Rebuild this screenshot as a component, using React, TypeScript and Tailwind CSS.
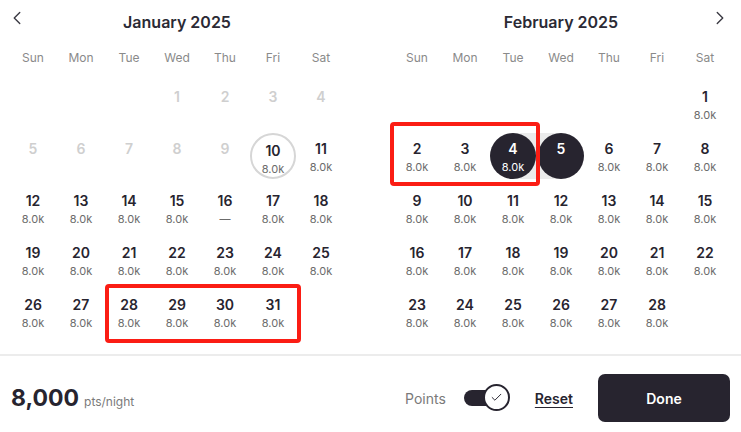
import React from 'react';
import { ChevronLeft, ChevronRight, Check } from 'lucide-react';

type Day = {
  n: number;
  price?: string;
  disabled?: boolean;
  today?: boolean;
  selected?: boolean;
  rangeEnd?: boolean;
  rangeStart?: boolean;
};

const WEEKDAYS = ['Sun', 'Mon', 'Tue', 'Wed', 'Thu', 'Fri', 'Sat'];

const buildMonth = (offset: number, days: number, extra: (n: number) => Partial<Day>) => {
  const cells: (Day | null)[] = [];
  for (let i = 0; i < offset; i++) cells.push(null);
  for (let n = 1; n <= days; n++) cells.push({ n, price: '8.0k', ...extra(n) });
  return cells;
};

const january = buildMonth(3, 31, (n) => {
  if (n < 10) return { disabled: true, price: undefined };
  if (n === 10) return { today: true };
  if (n === 16) return { price: '—' };
  return {};
});

const february = buildMonth(6, 28, (n) => {
  if (n === 4) return { selected: true, rangeStart: true };
  if (n === 5) return { selected: true, rangeEnd: true, price: undefined };
  return {};
});

const DayCell = ({ day }: { day: Day | null }) => {
  if (!day) return <div className="h-[52px]" />;
  return (
    <div className="relative h-[52px] flex justify-center">
      {day.rangeStart && <span className="absolute left-1/2 right-0 top-[3px] h-[46px] bg-[#ebebeb]" />}
      {day.rangeEnd && <span className="absolute left-0 right-1/2 top-[3px] h-[46px] bg-[#ebebeb]" />}
      <div
        className={`relative mt-[3px] w-[46px] h-[46px] rounded-full flex flex-col items-center pt-[7px] ${
          day.selected ? 'bg-[#27242f] text-white' : ''
        } ${day.today ? 'border-2 border-[#d6d6d6] pt-[5px]' : ''}`}
      >
        <span
          className={`text-[14px] leading-[18px] font-semibold ${
            day.disabled ? 'text-[#cfcfcf]' : day.selected ? 'text-white' : 'text-[#27242f]'
          }`}
        >
          {day.n}
        </span>
        {day.price && (
          <span className={`mt-[1px] text-[11px] leading-[16px] ${day.selected ? 'text-white' : 'text-[#6b6b6b]'}`}>
            {day.price}
          </span>
        )}
      </div>
    </div>
  );
};

const Month = ({ title, cells, left, right }: { title: string; cells: (Day | null)[]; left?: boolean; right?: boolean }) => (
  <div className="w-[336px]">
    <div className="relative h-[42px] pt-[2px] flex items-center justify-center">
      {left && <ChevronLeft className="absolute left-[-3px] top-[7px] text-[#3a3942]" size={22} strokeWidth={1.5} />}
      {right && <ChevronRight className="absolute right-[-2px] top-[7px] text-[#3a3942]" size={22} strokeWidth={1.5} />}
      <h2 className="text-[16px] font-semibold text-[#2b2a35]">{title}</h2>
    </div>
    <div className="grid grid-cols-7 h-[36px] pb-[4px] items-center">
      {WEEKDAYS.map((w) => (
        <span key={w} className="text-center text-[12px] text-[#8a8a8a]">{w}</span>
      ))}
    </div>
    <div className="grid grid-cols-7">
      {cells.map((c, i) => (
        <DayCell key={i} day={c} />
      ))}
    </div>
  </div>
);

export default function App() {
  return (
    <div className="relative w-[741px] h-[432px] bg-white overflow-hidden" style={{ fontFamily: 'Inter, "Noto Sans", sans-serif' }}>
      <div className="flex gap-[48px] pl-[9px] h-[354px]">
        <Month title="January 2025" cells={january} left />
        <Month title="February 2025" cells={february} right />
      </div>

      <div className="border-t-2 border-[#ececec] h-[78px] pt-[8px] flex items-center pl-[11px] pr-[11px]">
        <div className="flex items-baseline gap-[5px]">
          <span className="text-[23px] font-bold text-[#27242f]">8,000</span>
          <span className="text-[12px] text-[#7a7a7a]">pts/night</span>
        </div>
        <div className="ml-auto flex items-center">
          <span className="text-[14px] text-[#7a7a7a]">Points</span>
          <div className="relative ml-[18px] w-[46px] h-[28px] flex items-center">
            <span className="w-[40px] h-[16px] rounded-full bg-[#27242f]" />
            <span className="absolute left-[19px] top-0 w-[27px] h-[27px] rounded-full bg-white border-2 border-[#27242f] flex items-center justify-center">
              <Check size={13} strokeWidth={1.8} className="text-[#27242f]" />
            </span>
          </div>
          <span className="ml-[25px] text-[14px] font-semibold text-[#27242f] underline underline-offset-[3px]">Reset</span>
          <button className="ml-[25px] w-[132px] h-[48px] rounded-[7px] bg-[#27242f] text-white text-[14px] font-semibold">
            Done
          </button>
        </div>
      </div>

      {/* annotation boxes */}
      <div className="absolute left-[105px] top-[284px] w-[196px] h-[59px] border-[4px] border-[#fb1d14] rounded-[4px]" />
      <div className="absolute left-[390px] top-[122px] w-[150px] h-[64px] border-[4px] border-[#fb1d14] rounded-[4px]" />
    </div>
  );
}
